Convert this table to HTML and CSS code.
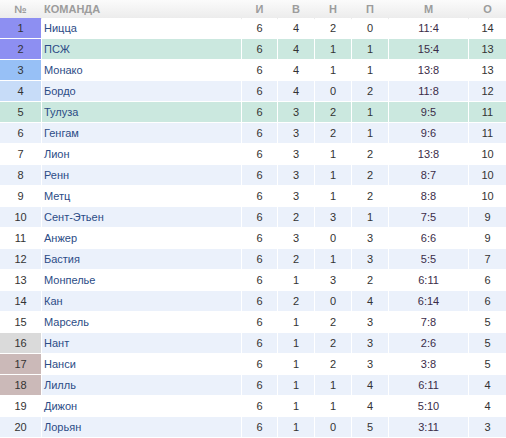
FILE: index.html
```html
<!DOCTYPE html>
<html lang="ru">
<head>
<meta charset="utf-8">
<link rel="stylesheet" href="styles.css">
</head>
<body>
<div class="table">
  <div class="row head">
    <div class="c pos">№</div><div class="c team">КОМАНДА</div><div class="c">И</div><div class="c">В</div><div class="c">Н</div><div class="c">П</div><div class="c">М</div><div class="c">О</div>
  </div>
  <div class="row odd"><div class="c pos p-cl">1</div><div class="c team">Ницца</div><div class="c">6</div><div class="c">4</div><div class="c">2</div><div class="c">0</div><div class="c sc">11:4</div><div class="c">14</div></div>
  <div class="row green"><div class="c pos p-cl">2</div><div class="c team">ПСЖ</div><div class="c">6</div><div class="c">4</div><div class="c">1</div><div class="c">1</div><div class="c sc">15:4</div><div class="c">13</div></div>
  <div class="row odd"><div class="c pos p-q">3</div><div class="c team">Монако</div><div class="c">6</div><div class="c">4</div><div class="c">1</div><div class="c">1</div><div class="c sc">13:8</div><div class="c">13</div></div>
  <div class="row even"><div class="c pos p-el">4</div><div class="c team">Бордо</div><div class="c">6</div><div class="c">4</div><div class="c">0</div><div class="c">2</div><div class="c sc">11:8</div><div class="c">12</div></div>
  <div class="row green"><div class="c pos p-el2">5</div><div class="c team">Тулуза</div><div class="c">6</div><div class="c">3</div><div class="c">2</div><div class="c">1</div><div class="c sc">9:5</div><div class="c">11</div></div>
  <div class="row even"><div class="c pos">6</div><div class="c team">Генгам</div><div class="c">6</div><div class="c">3</div><div class="c">2</div><div class="c">1</div><div class="c sc">9:6</div><div class="c">11</div></div>
  <div class="row odd"><div class="c pos">7</div><div class="c team">Лион</div><div class="c">6</div><div class="c">3</div><div class="c">1</div><div class="c">2</div><div class="c sc">13:8</div><div class="c">10</div></div>
  <div class="row even"><div class="c pos">8</div><div class="c team">Ренн</div><div class="c">6</div><div class="c">3</div><div class="c">1</div><div class="c">2</div><div class="c sc">8:7</div><div class="c">10</div></div>
  <div class="row odd"><div class="c pos">9</div><div class="c team">Метц</div><div class="c">6</div><div class="c">3</div><div class="c">1</div><div class="c">2</div><div class="c sc">8:8</div><div class="c">10</div></div>
  <div class="row even"><div class="c pos">10</div><div class="c team">Сент-Этьен</div><div class="c">6</div><div class="c">2</div><div class="c">3</div><div class="c">1</div><div class="c sc">7:5</div><div class="c">9</div></div>
  <div class="row odd"><div class="c pos">11</div><div class="c team">Анжер</div><div class="c">6</div><div class="c">3</div><div class="c">0</div><div class="c">3</div><div class="c sc">6:6</div><div class="c">9</div></div>
  <div class="row even"><div class="c pos">12</div><div class="c team">Бастия</div><div class="c">6</div><div class="c">2</div><div class="c">1</div><div class="c">3</div><div class="c sc">5:5</div><div class="c">7</div></div>
  <div class="row odd"><div class="c pos">13</div><div class="c team">Монпелье</div><div class="c">6</div><div class="c">1</div><div class="c">3</div><div class="c">2</div><div class="c sc">6:11</div><div class="c">6</div></div>
  <div class="row even"><div class="c pos">14</div><div class="c team">Кан</div><div class="c">6</div><div class="c">2</div><div class="c">0</div><div class="c">4</div><div class="c sc">6:14</div><div class="c">6</div></div>
  <div class="row odd"><div class="c pos">15</div><div class="c team">Марсель</div><div class="c">6</div><div class="c">1</div><div class="c">2</div><div class="c">3</div><div class="c sc">7:8</div><div class="c">5</div></div>
  <div class="row even"><div class="c pos p-po">16</div><div class="c team">Нант</div><div class="c">6</div><div class="c">1</div><div class="c">2</div><div class="c">3</div><div class="c sc">2:6</div><div class="c">5</div></div>
  <div class="row odd"><div class="c pos p-rel">17</div><div class="c team">Нанси</div><div class="c">6</div><div class="c">1</div><div class="c">2</div><div class="c">3</div><div class="c sc">3:8</div><div class="c">5</div></div>
  <div class="row even"><div class="c pos p-rel">18</div><div class="c team">Лилль</div><div class="c">6</div><div class="c">1</div><div class="c">1</div><div class="c">4</div><div class="c sc">6:11</div><div class="c">4</div></div>
  <div class="row odd"><div class="c pos">19</div><div class="c team">Дижон</div><div class="c">6</div><div class="c">1</div><div class="c">1</div><div class="c">4</div><div class="c sc">5:10</div><div class="c">4</div></div>
  <div class="row even"><div class="c pos">20</div><div class="c team">Лорьян</div><div class="c">6</div><div class="c">1</div><div class="c">0</div><div class="c">5</div><div class="c sc">3:11</div><div class="c">3</div></div>
</div>
</body>
</html>
```

FILE: styles.css
```css
html, body {
  margin: 0;
  padding: 0;
  background: #fff;
}
body {
  font-family: "Liberation Sans", Arial, sans-serif;
  font-size: 11px;
  color: #333;
}
.table {
  width: 506px;
  display: flex;
  flex-direction: column;
}
.row {
  display: grid;
  grid-template-columns: 41px 199px 35px 36px 36px 36px 79px 37px;
  column-gap: 1px;
  height: 20px;
  margin-bottom: 1px;
}
.c {
  line-height: 20px;
  text-align: center;
  white-space: nowrap;
}
.team {
  text-align: left;
  padding-left: 2px;
  color: #2b4c86;
}
.sc {
  color: #3a2c48;
}
.head {
  height: 18px;
  margin-bottom: 0;
  background: linear-gradient(#fbfbfb, #ececec);
  box-shadow: 0 1px 1px rgba(0,0,0,0.08);
  column-gap: 1px;
}
.head .c {
  line-height: 18px;
  color: #9c9c9c;
  font-weight: bold;
}
.head .team {
  color: #9c9c9c;
}
.odd .c { background: #fff; }
.even .c { background: #ebf1fb; }
.green .c { background: #cbe8df; }
.head .c { background: transparent; }
.pos.p-cl { background: #8d8ff2; }
.pos.p-q { background: #97c0f6; }
.pos.p-el { background: #c7dcf8; }
.pos.p-el2 { background: #c7e6dc; }
.pos.p-po { background: #dadada; }
.pos.p-rel { background: #cbb9b8; }
```
